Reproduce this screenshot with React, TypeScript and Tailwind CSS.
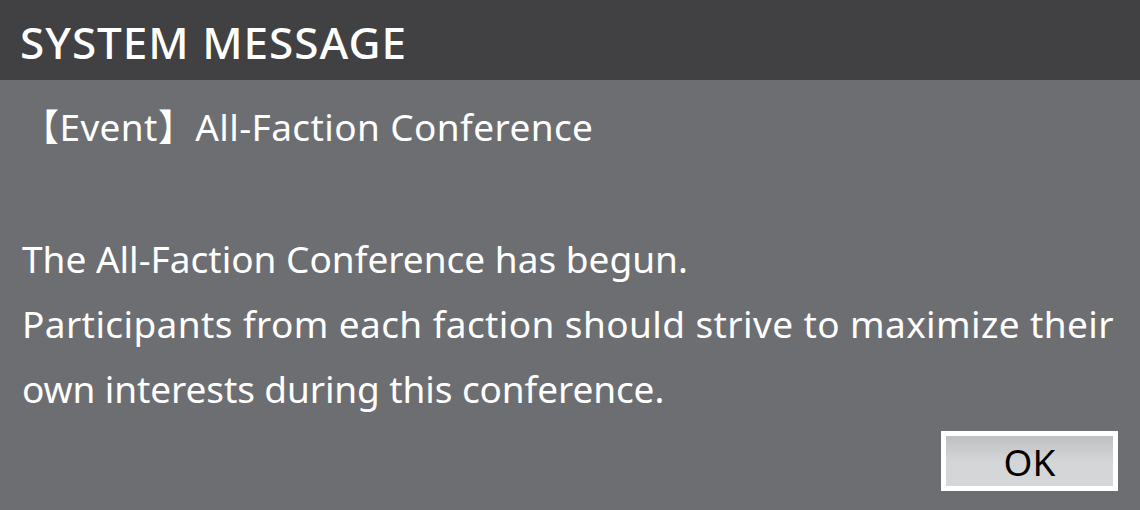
export default function App() {
  return (
    <div
      className="w-[1140px] h-[510px] flex flex-col bg-[#6d6e72] text-white overflow-hidden"
      style={{ fontFamily: '"Noto Sans", "Noto Sans CJK JP", sans-serif' }}
    >
      {/* Header */}
      <div className="h-[80px] bg-[#414143] flex items-center pt-[4px] px-[20px]">
        <h1 className="text-[44px] leading-none font-medium tracking-[1px]">SYSTEM MESSAGE</h1>
      </div>

      {/* Body */}
      <div className="flex-1 flex flex-col px-[22px]">
        <p className="mt-[20px] text-[37px] leading-[50px] tracking-[0.4px]">
          <span style={{ fontFamily: '"Noto Sans CJK JP", sans-serif' }}>【</span>Event
          <span style={{ fontFamily: '"Noto Sans CJK JP", sans-serif' }}>】</span>All-Faction Conference
        </p>
        <div className="mt-[74px] text-[37px] leading-[65px]">
          <p>The All-Faction Conference has begun.</p>
          <p className="tracking-[0.4px]">Participants from each faction should strive to maximize their</p>
          <p className="tracking-[-0.1px]">own interests during this conference.</p>
        </div>
        <div className="flex justify-end mt-[10px]">
          <button className="w-[177px] h-[60px] border-[5px] border-white bg-gradient-to-b from-[#bfc0c2] via-[#d4d5d7] to-[#d6d7d9] text-black text-[37px] leading-none flex items-center justify-center">
            OK
          </button>
        </div>
      </div>
    </div>
  );
}
